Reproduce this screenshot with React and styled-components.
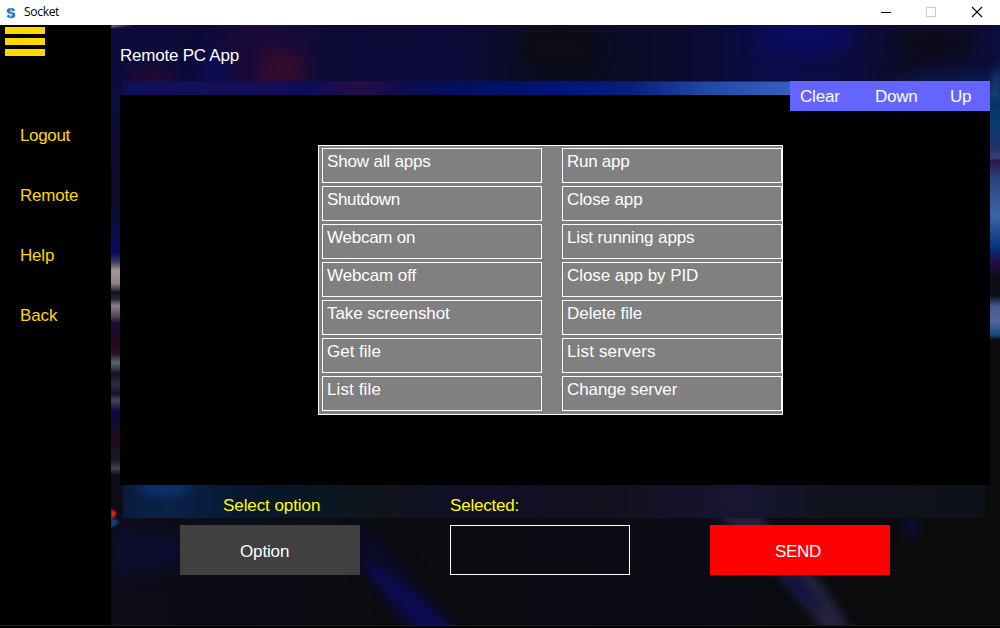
import React from "react";
import styled, { createGlobalStyle } from "styled-components";

const GlobalStyle = createGlobalStyle`
  * { box-sizing: border-box; }
  body { margin: 0; background: #000; overflow: hidden; }
  button { border: 0; background: none; padding: 0; font: inherit; color: inherit; text-align: left; }
`;

const Window = styled.div`
  width: 1000px;
  height: 628px;
  display: flex;
  flex-direction: column;
  font: 17px/20px "Liberation Sans", Arial, sans-serif;
  color: #fff;
  white-space: nowrap;
`;

const TitleBar = styled.header`
  height: 25px;
  flex: none;
  display: flex;
  align-items: center;
  padding-left: 6px;
  background: #fff;
  color: #000;
`;

const WindowTitle = styled.span`
  flex: 1;
  padding-left: 8px;
  font: 12px/24px "Open Sans", "Noto Sans", sans-serif;
  letter-spacing: -0.3px;
  position: relative;
  top: -1px;
`;

const WindowControls = styled.svg`
  width: 138px;
  height: 25px;
`;

const Body = styled.div`
  height: 603px;
  display: flex;
  border-bottom: 2px solid #000;
  box-shadow: inset 0 -1px #1d1b1d;
`;

const Sidebar = styled.nav`
  width: 111px;
  height: 600px;
  background: #000;
  color: #ffd700;
  display: flex;
  flex-direction: column;
`;

const MenuButton = styled.button`
  margin: 2px 0 70px 5px;
  width: 40px;
  height: 29px;
  display: flex;
  flex-direction: column;
  justify-content: space-between;
`;

const MenuBar = styled.span`
  height: 7px;
  width: 40px;
  background: #ffd700;
`;

const NavItem = styled.a`
  height: 60px;
  padding-left: 20px;
`;

const Main = styled.main`
  position: relative;
  width: 889px;
  height: 600px;
  display: flex;
  flex-direction: column;
  isolation: isolate;
`;

const Backdrop = styled.svg`
  position: absolute;
  inset: 0;
  z-index: -1;
`;

const PageTitle = styled.h1`
  margin: 0;
  height: 70px;
  padding: 21px 0 0 9px;
  font: inherit;
`;

const Text = styled.span`
  letter-spacing: ${(p) => p.$track || 0}px;
`;

const Screen = styled.section`
  position: relative;
  width: 870px;
  height: 390px;
  margin-left: 9px;
  padding: 50px 0 0 198px;
  background: #000;
`;

const Toolbar = styled.div`
  position: absolute;
  top: -14px;
  right: 0;
  width: 200px;
  height: 30px;
  padding: 2px 0 0 10px;
  display: grid;
  grid-template-columns: 75px 75px auto;
  align-items: center;
  background: #6464ff;
`;

const CommandGrid = styled.div`
  width: 465px;
  height: 270px;
  padding: 2px 0 0 3px;
  border: 1px solid #fff;
  background: #808080;
  display: grid;
  grid-template-columns: 220px 220px;
  grid-auto-rows: 35px;
  align-content: start;
  gap: 3px 20px;
`;

const Command = styled.button`
  border: 1px solid #fff;
  padding: 3px 4px 10px;
  line-height: 20px;
`;

const Controls = styled.footer`
  display: grid;
  grid-template-columns: 270px 260px 180px;
  grid-template-rows: 29px 50px;
  padding: 11px 0 0 69px;
`;

const Label = styled.span`
  color: #ff0;
  padding-left: ${(p) => p.$indent || 0}px;
`;

const ActionButton = styled.button`
  width: 180px;
  height: 50px;
  padding: 3px 0 0 ${(p) => p.$indent}px;
  background: ${(p) => p.$color};
`;

const SelectedBox = styled.div`
  width: 180px;
  height: 50px;
  border: 1px solid #fff;
`;

const nav = [["Logout", -0.35], ["Remote", -0.2], ["Help", -0.2], ["Back", -0.1]];

const commands = [
  ["Show all apps", -0.17], ["Run app", -0.28],
  ["Shutdown", -0.35], ["Close app", -0.12],
  ["Webcam on", -0.25], ["List running apps", -0.12],
  ["Webcam off", -0.1], ["Close app by PID", -0.06],
  ["Take screenshot", -0.07], ["Delete file", -0.04],
  ["Get file", 0], ["List servers", 0.15],
  ["List file", 0.12], ["Change server", -0.1],
];

function AppIcon() {
  return (
    <svg width="10" height="12" viewBox="0 0 10 12">
      <path d="M8.3 3.6Q7.6 2.2 5 2.2Q2 2.2 2 4.1Q2 5.5 5 6Q8 6.4 8 8Q8 9.9 5 9.9Q2.3 9.9 1.5 8.4" fill="none" stroke="#2474c4" strokeWidth="2.5" />
      <path d="M3.4 2.2H6M3.5 5.6L6.4 6.5M3.6 9.7H6" stroke="#54a8ee" strokeWidth="1.2" />
    </svg>
  );
}

function SoftFilter({ id, blur }) {
  return (
    <filter id={id} x="-100%" y="-150%" width="300%" height="400%" colorInterpolationFilters="sRGB">
      <feGaussianBlur stdDeviation={blur} />
    </filter>
  );
}

function Scene() {
  return (
    <Backdrop width="889" height="600" viewBox="111 25 889 600" aria-hidden="true">
      <defs>
        <linearGradient id="top" x1="111" x2="1000" y1="0" y2="0" gradientUnits="userSpaceOnUse">
          <stop offset="0" stopColor="#0d0b3b" /><stop offset=".1" stopColor="#0d0a38" />
          <stop offset=".17" stopColor="#1d0a3a" /><stop offset=".25" stopColor="#0c0b36" />
          <stop offset=".38" stopColor="#0c0b3a" /><stop offset=".5" stopColor="#0c0c1e" />
          <stop offset=".63" stopColor="#0b0b2c" /><stop offset=".75" stopColor="#0b0b4c" />
          <stop offset=".84" stopColor="#0c0b3e" /><stop offset=".9" stopColor="#0d0c24" />
          <stop offset="1" stopColor="#0c0d3c" />
        </linearGradient>
        <linearGradient id="band" x1="123" x2="800" y1="0" y2="0" gradientUnits="userSpaceOnUse">
          <stop offset="0" stopColor="#10105a" /><stop offset=".2" stopColor="#150e58" />
          <stop offset=".27" stopColor="#0c0c5a" /><stop offset=".35" stopColor="#260d46" />
          <stop offset=".42" stopColor="#0c0c50" /><stop offset=".5" stopColor="#001060" />
          <stop offset=".64" stopColor="#001478" /><stop offset=".75" stopColor="#05207c" />
          <stop offset=".86" stopColor="#2048a4" /><stop offset="1" stopColor="#3a60c2" />
        </linearGradient>
        <linearGradient id="foot" x1="123" x2="985" y1="0" y2="0" gradientUnits="userSpaceOnUse">
          <stop offset="0" stopColor="#0a1c3c" /><stop offset=".05" stopColor="#0a2148" />
          <stop offset=".14" stopColor="#061730" /><stop offset=".22" stopColor="#091723" />
          <stop offset=".3" stopColor="#0e141a" /><stop offset=".4" stopColor="#0f0f29" />
          <stop offset=".55" stopColor="#12101d" /><stop offset=".72" stopColor="#171532" />
          <stop offset=".82" stopColor="#10131c" /><stop offset="1" stopColor="#0c1217" />
        </linearGradient>
        <linearGradient id="left" x1="0" x2="0" y1="90" y2="530" gradientUnits="userSpaceOnUse">
          <stop offset="0" stopColor="#0c0c40" /><stop offset=".25" stopColor="#0d0c28" />
          <stop offset=".37" stopColor="#090a62" /><stop offset=".39" stopColor="#353660" />
          <stop offset=".41" stopColor="#a39599" /><stop offset=".44" stopColor="#8f8188" />
          <stop offset=".46" stopColor="#111124" /><stop offset=".475" stopColor="#252334" />
          <stop offset=".49" stopColor="#8c8087" /><stop offset=".515" stopColor="#4f4358" />
          <stop offset=".53" stopColor="#170b3c" />
          <stop offset=".58" stopColor="#280a16" /><stop offset=".6" stopColor="#221522" />
          <stop offset=".62" stopColor="#5c6572" />
          <stop offset=".645" stopColor="#101222" /><stop offset=".67" stopColor="#302c3c" />
          <stop offset=".69" stopColor="#17112a" /><stop offset=".705" stopColor="#474060" />
          <stop offset=".73" stopColor="#0b0a42" /><stop offset=".8" stopColor="#210b18" />
          <stop offset=".84" stopColor="#1a1724" /><stop offset=".86" stopColor="#3c444f" />
          <stop offset=".875" stopColor="#0d0d1a" /><stop offset="1" stopColor="#0d0d1a" />
        </linearGradient>
        <linearGradient id="right" x1="0" x2="0" y1="80" y2="340" gradientUnits="userSpaceOnUse">
          <stop offset="0" stopColor="#0b2254" /><stop offset=".15" stopColor="#063b70" />
          <stop offset=".26" stopColor="#1d3266" /><stop offset=".3" stopColor="#384375" />
          <stop offset=".31" stopColor="#2c1745" /><stop offset=".37" stopColor="#28407c" />
          <stop offset=".52" stopColor="#3d64a4" /><stop offset=".64" stopColor="#07367c" />
          <stop offset=".7" stopColor="#220c48" /><stop offset=".76" stopColor="#0d0c14" />
          <stop offset=".83" stopColor="#0b101c" /><stop offset=".87" stopColor="#46598b" />
          <stop offset=".93" stopColor="#52669c" /><stop offset=".98" stopColor="#14497b" />
          <stop offset="1" stopColor="#0b0b0c" />
        </linearGradient>
        <linearGradient id="floor" x1="111" x2="1000" y1="0" y2="0" gradientUnits="userSpaceOnUse">
          <stop offset="0" stopColor="#0d0d1b" /><stop offset=".32" stopColor="#0c0c10" />
          <stop offset=".6" stopColor="#0c0c17" /><stop offset=".78" stopColor="#0b0b10" />
          <stop offset="1" stopColor="#0b0b0b" />
        </linearGradient>
        <SoftFilter id="soft" blur="8" />
        <SoftFilter id="fine" blur="4" />
        <SoftFilter id="edge" blur="1" />
      </defs>
      <rect x="111" y="25" width="889" height="600" fill="url(#floor)" />
      <rect x="111" y="25" width="889" height="66" fill="url(#top)" />
      <ellipse cx="283" cy="69" rx="23" ry="20" fill="#340b2c" filter="url(#soft)" />
      <ellipse cx="153" cy="80" rx="24" ry="9" fill="#270b32" filter="url(#soft)" />
      <ellipse cx="214" cy="70" rx="16" ry="22" fill="#0d0b54" filter="url(#soft)" />
      <ellipse cx="805" cy="36" rx="50" ry="18" fill="#0b0b60" filter="url(#soft)" />
      <ellipse cx="937" cy="44" rx="38" ry="17" fill="#0d0c1c" filter="url(#soft)" />
      <ellipse cx="560" cy="48" rx="40" ry="25" fill="#0c0d17" filter="url(#soft)" />
      <ellipse cx="960" cy="84" rx="70" ry="9" fill="#0b1c56" filter="url(#soft)" />
      <path d="M111 25H134Q120 26 111 27.5Z" fill="#85828f" filter="url(#edge)" />
      <rect x="111" y="90" width="12" height="440" fill="url(#left)" />
      <rect x="988" y="92" width="12" height="248" fill="url(#right)" />
      <path d="M1000 64Q993 74 989 98H1000Z" fill="#1b4a7e" filter="url(#fine)" />
      <path d="M123 81H985V99H123Z" fill="url(#band)" />
      <path d="M123 81.5H790" stroke="#10114a" opacity=".6" />
      <path d="M111 525L190 540V562L111 577Z" fill="#0d0d30" filter="url(#soft)" />
      <path d="M360 525Q385 538 410 575L460 632H405Q390 595 353 556Z" fill="#0c0b2a" filter="url(#soft)" />
      <path d="M361 560Q390 570 425 603L460 635H422Q385 596 361 560Z" fill="#0c0b50" filter="url(#fine)" />
      <path d="M715 512H760L770 530L815 575Q835 600 851 632H825L780 575Z" fill="#24223c" filter="url(#fine)" />
      <path d="M778 572L800 575L825 610L800 602Z" fill="#10143e" filter="url(#fine)" />
      <ellipse cx="911" cy="527" rx="8" ry="13" fill="#0d0d32" filter="url(#fine)" />
      <path d="M111 509L116 512Q117 516 111 519Z" fill="#ee2214" filter="url(#edge)" />
      <path d="M111 518L119 521Q116 526 111 528Z" fill="#16437c" filter="url(#edge)" />
      <rect x="123" y="484" width="862" height="34" fill="url(#foot)" />
      <path d="M135 484H196Q188 496 165 496T135 484Z" fill="#0b3474" filter="url(#fine)" />
    </Backdrop>
  );
}

export default function App() {
  return (
    <Window>
      <GlobalStyle />
      <TitleBar>
        <AppIcon />
        <WindowTitle>Socket</WindowTitle>
        <WindowControls viewBox="862 0 138 25" fill="none" shapeRendering="crispEdges">
          <path d="M881 12.5H891" stroke="#000" />
          <rect x="926.5" y="7.5" width="9" height="9" stroke="#ccc" />
          <path d="M972 7L982 17M982 7L972 17" stroke="#000" strokeWidth="1.1" shapeRendering="auto" />
        </WindowControls>
      </TitleBar>
      <Body>
        <Sidebar>
          <MenuButton aria-label="Menu"><MenuBar /><MenuBar /><MenuBar /></MenuButton>
          {nav.map(([name, track]) => <NavItem key={name}><Text $track={track}>{name}</Text></NavItem>)}
        </Sidebar>
        <Main>
          <Scene />
          <PageTitle><Text $track={-0.23}>Remote PC App</Text></PageTitle>
          <Screen>
            <Toolbar>
              <button><Text $track={-0.2}>Clear</Text></button>
              <button><Text $track={-0.25}>Down</Text></button>
              <button><Text $track={-0.2}>Up</Text></button>
            </Toolbar>
            <CommandGrid>
              {commands.map(([name, track]) => (
                <Command key={name}><Text $track={track}>{name}</Text></Command>
              ))}
            </CommandGrid>
          </Screen>
          <Controls>
            <Label $indent={43}><Text $track={-0.08}>Select option</Text></Label>
            <Label><Text $track={-0.2}>Selected:</Text></Label>
            <span />
            <ActionButton $color="#404040" $indent={60}><Text $track={-0.15}>Option</Text></ActionButton>
            <SelectedBox />
            <ActionButton $color="#f00" $indent={65}><Text $track={-0.3}>SEND</Text></ActionButton>
          </Controls>
        </Main>
      </Body>
    </Window>
  );
}
